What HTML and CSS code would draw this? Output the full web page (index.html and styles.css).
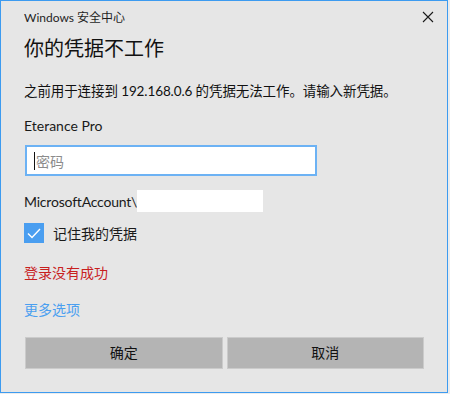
FILE: index.html
```html
<!DOCTYPE html>
<html lang="zh-CN">
<head>
    <meta charset="UTF-8">
    <meta name="viewport" content="width=device-width, initial-scale=1.0">
    <title>Windows 安全中心</title>
    <link rel="stylesheet" href="styles.css">
</head>
<body>
    <div class="dialog">
        <div class="titlebar">
            <span class="app-name">Windows 安全中心</span>
            <span class="close-btn">
                <svg width="12" height="12" viewBox="0 0 12 12">
                    <path d="M1 1 L11 11 M11 1 L1 11" stroke="#1a1a1a" stroke-width="1.1" fill="none"/>
                </svg>
            </span>
        </div>

        <h1>你的凭据不工作</h1>

        <p class="message">之前用于连接到 192.168.0.6 的凭据无法工作。请输入新凭据。</p>

        <div class="user-name">Eterance Pro</div>

        <div class="password-field">
            <span class="caret"></span>
            <span class="placeholder">密码</span>
        </div>

        <div class="account-row">
            <span>MicrosoftAccount\</span>
            <span class="account-box"></span>
        </div>

        <label class="remember">
            <span class="checkbox">
                <svg width="20" height="20" viewBox="0 0 20 20">
                    <path d="M4 10.5 L8 14.5 L16 6" stroke="#ffffff" stroke-width="1.4" fill="none"/>
                </svg>
            </span>
            <span>记住我的凭据</span>
        </label>

        <div class="error-text">登录没有成功</div>

        <div class="more-link">更多选项</div>

        <div class="buttons">
            <div class="btn">确定</div>
            <div class="btn">取消</div>
        </div>
    </div>
</body>
</html>
```

FILE: styles.css
```css
* {
    margin: 0;
    padding: 0;
    box-sizing: border-box;
}

body {
    font-family: Lato, "Noto Sans CJK SC", sans-serif;
    background: #ececec;
    color: #1a1a1a;
}

.dialog {
    width: 448px;
    height: 393px;
    background: #e6e6e6;
    border: 1px solid #3d9bf0;
    padding: 0 23px 0 23px;
}

.titlebar {
    display: flex;
    justify-content: space-between;
    align-items: center;
    height: 31px;
    font-size: 12px;
    color: #1f1f1f;
}

.close-btn {
    display: flex;
    margin-right: -10px;
}

h1 {
    margin-top: 2px;
    font-size: 20px;
    line-height: 28px;
    font-weight: 400;
    color: #111;
}

.message {
    margin-top: 19px;
    font-size: 13.5px;
    letter-spacing: -0.1px;
    line-height: 20px;
    color: #111;
}

.user-name {
    margin-top: 15px;
    font-size: 14px;
    line-height: 20px;
}

.password-field {
    display: flex;
    align-items: center;
    margin-top: 9px;
    margin-left: 1px;
    width: 292px;
    height: 31px;
    background: #ffffff;
    border: 2px solid #6cb2f4;
    padding-left: 7px;
}

.caret {
    width: 1px;
    height: 18px;
    background: #111;
}

.placeholder {
    margin-left: 1px;
    font-size: 14px;
    color: #8c8c8c;
}

.account-row {
    display: flex;
    align-items: center;
    margin-top: 14px;
    height: 22px;
    font-size: 14px;
    letter-spacing: -0.2px;
}

.account-box {
    width: 126px;
    height: 22px;
    background: #ffffff;
}

.remember {
    display: flex;
    align-items: center;
    gap: 9px;
    margin-top: 11px;
    height: 20px;
    font-size: 14px;
}

.checkbox {
    display: flex;
    width: 20px;
    height: 20px;
    background: #4a9ef0;
}

.error-text {
    margin-top: 20px;
    font-size: 14px;
    line-height: 20px;
    color: #c8201e;
}

.more-link {
    margin-top: 17px;
    font-size: 14px;
    line-height: 20px;
    color: #4a9ff0;
}

.buttons {
    display: flex;
    gap: 4px;
    margin-top: 17px;
    margin-left: 1px;
}

.btn {
    width: 198px;
    height: 32px;
    line-height: 30px;
    text-align: center;
    font-size: 14px;
    background: #b4b4b4;
    border: 1px solid #cbcbcb;
    color: #111;
}
```
